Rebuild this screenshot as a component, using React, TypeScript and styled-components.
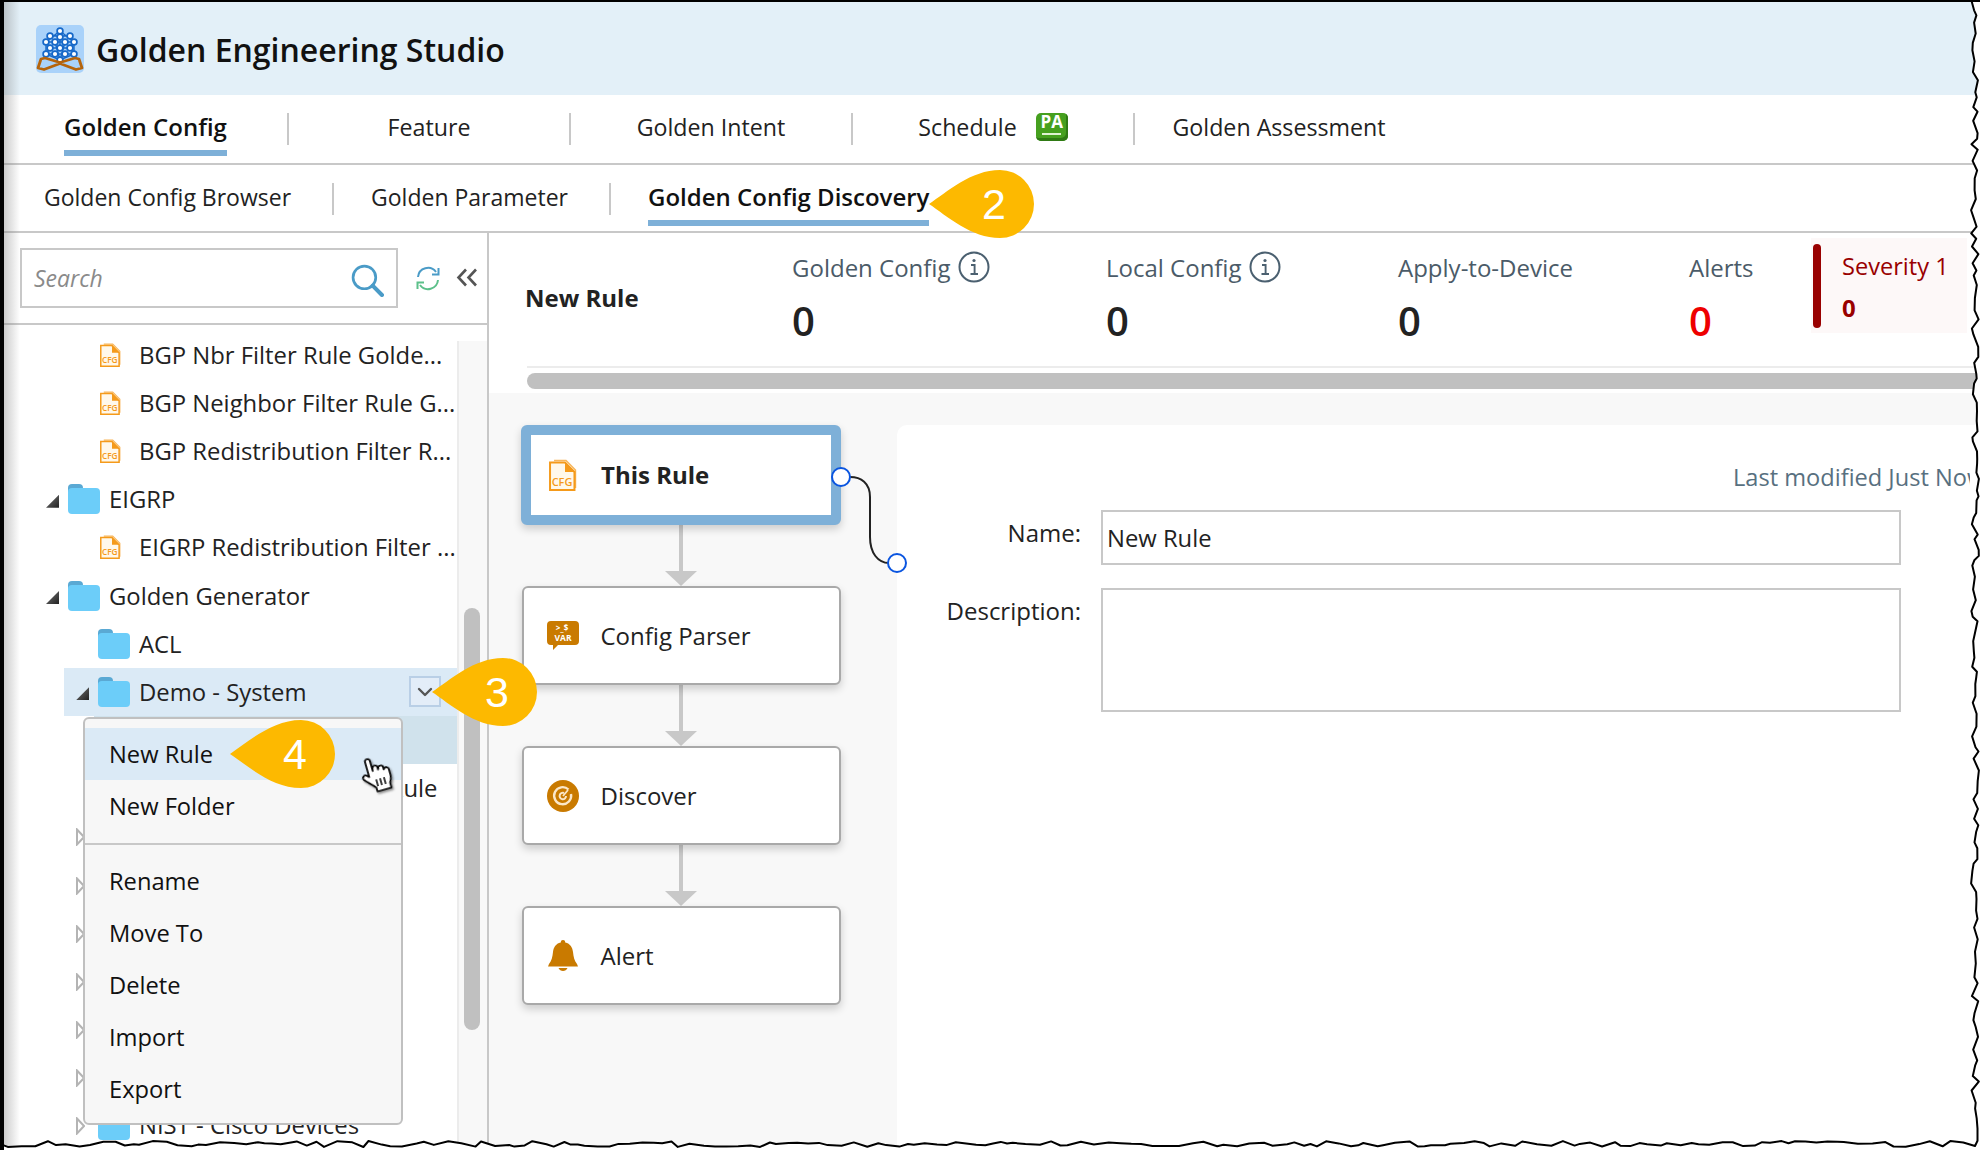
import React from 'react';
import styled, { createGlobalStyle } from 'styled-components';
import { ChevronDown } from 'lucide-react';

const GlobalStyle = createGlobalStyle`
  html, body {
    margin: 0;
    padding: 0;
    background: #fff;
  }
  * {
    box-sizing: border-box;
  }
  body {
    font-family: 'Open Sans', 'Liberation Sans', sans-serif;
    color: #1c1c1c;
  }
`;

const Screen = styled.div`
  position: relative;
  width: 1980px;
  height: 1150px;
  overflow: hidden;
  background: #fff;
  border-top: 2px solid #000;
  border-left: 4px solid #000;
`;

const EdgeShade = styled.div`
  position: absolute;
  left: 0;
  top: 0;
  bottom: 0;
  width: 16px;
  background: linear-gradient(90deg, rgba(120, 120, 120, 0.38), rgba(120, 120, 120, 0));
  z-index: 5;
  pointer-events: none;
`;

const Header = styled.header`
  height: 93px;
  background: #e3f0f8;
  display: flex;
  align-items: center;
  padding-left: 32px;
  gap: 12px;
`;

const AppTitle = styled.h1`
  margin: 0;
  font-size: 32px;
  font-weight: 600;
  color: #111;
  line-height: 40px;
  position: relative;
  top: 1px;
`;

const NavBar = styled.nav`
  display: flex;
  height: 70px;
  padding-top: 18px;
  border-bottom: 2px solid #c8c8c8;
  align-items: flex-start;
`;

const Tab = styled.div<{ $w: number; $last?: boolean }>`
  width: ${p => p.$w}px;
  height: 32px;
  display: flex;
  justify-content: center;
  align-items: flex-start;
  border-right: ${p => (p.$last ? 'none' : '2px solid #c8c8c8')};
`;

const TabLabel = styled.span<{ $active?: boolean }>`
  display: inline-block;
  margin-top: -2px;
  font-size: ${p => (p.$active ? 24 : 23.2)}px;
  line-height: 32px;
  font-weight: ${p => (p.$active ? 600 : 400)};
  color: ${p => (p.$active ? '#111' : '#222')};
  padding-bottom: 7px;
  border-bottom: 6px solid ${p => (p.$active ? '#7eb0d8' : 'transparent')};
  white-space: nowrap;
`;

const SubTabLabel = styled(TabLabel)`
  font-size: ${p => (p.$active ? 24 : 23)}px;
`;

const PaBadge = styled.span`
  width: 32px;
  height: 28px;
  margin-left: 19px;
  border-radius: 5px;
  background: #46a01f;
  box-shadow: inset -2px -3px 0 #2f7a14;
  color: #fff;
  font-size: 17px;
  font-weight: 700;
  line-height: 17px;
  text-align: center;
  position: relative;
  &::after {
    content: '';
    position: absolute;
    left: 6px;
    right: 7px;
    bottom: 6px;
    height: 2px;
    background: #dff2d2;
  }
`;

const SubNav = styled.nav`
  display: flex;
  height: 68px;
  padding: 18px 0 0 40px;
  border-bottom: 2px solid #c8c8c8;
  align-items: flex-start;
`;

const SubTab = styled.div<{ $last?: boolean }>`
  height: 32px;
  padding-right: ${p => (p.$last ? 0 : 41)}px;
  margin-right: 37px;
  border-right: ${p => (p.$last ? 'none' : '2px solid #c8c8c8')};
`;

const Body = styled.div`
  display: flex;
  height: 917px;
`;

const Sidebar = styled.aside`
  width: 485px;
  flex: none;
  border-right: 2px solid #c8c8c8;
  display: flex;
  flex-direction: column;
`;

const SearchBar = styled.div`
  height: 92px;
  flex: none;
  display: flex;
  align-items: flex-start;
  padding: 15px 0 0 16px;
  border-bottom: 2px solid #c8c8c8;
`;

const SearchBox = styled.div`
  width: 378px;
  height: 60px;
  border: 2px solid #c8c8c8;
  display: flex;
  align-items: center;
  padding: 0 12px 0 12px;
  justify-content: space-between;
`;

const Placeholder = styled.span`
  font-size: 23px;
  font-style: italic;
  color: #8a8a8a;
`;

const SearchIcon = styled.svg`
  width: 33px;
  height: 33px;
  margin-top: 5px;
`;

const RefreshIcon = styled.svg`
  width: 26px;
  height: 25px;
  margin: 18px 0 0 17px;
`;

const CollapseIcon = styled.svg`
  width: 22px;
  height: 19px;
  margin: 20px 0 0 15px;
`;

const TreeWrap = styled.div`
  flex: 1;
  display: flex;
  min-height: 0;
`;

const TreeList = styled.div`
  width: 453px;
  flex: none;
  padding-top: 6px;
  overflow: hidden;
`;

const ScrollTrack = styled.div`
  flex: 1;
  margin-top: 16px;
  background: #f8f8f8;
  border-left: 2px solid #ececec;
  padding: 267px 0 0 5px;
`;

const ScrollThumb = styled.div`
  width: 16px;
  height: 422px;
  border-radius: 8px;
  background: #c0c0c0;
`;

const Row = styled.div<{ $depth: number; $bg?: string }>`
  height: 48.1px;
  margin-left: ${p => p.$depth * 30}px;
  padding-left: 11px;
  display: flex;
  align-items: center;
  background: ${p => p.$bg || 'transparent'};
  white-space: nowrap;
`;

const TwistySlot = styled.span`
  width: 14px;
  height: 18px;
  margin-right: 9px;
  flex: none;
  display: flex;
  align-items: center;
  justify-content: flex-start;
  padding-left: 1px;
  svg {
    margin-top: 3px;
  }
`;

const OpenTwisty = styled.span`
  width: 13px;
  height: 13px;
  margin-top: 4px;
  background: linear-gradient(135deg, #777, #222);
  clip-path: polygon(100% 0, 100% 100%, 0 100%);
`;

const IconSlot = styled.span`
  width: 32px;
  margin-right: 9px;
  flex: none;
  display: flex;
  align-items: center;
`;

const FileIconOffset = styled.span`
  margin-left: 2px;
  display: flex;
`;

const RowText = styled.span`
  font-size: 23.85px;
  line-height: 32px;
  color: #222;
`;

const RowMenuButton = styled.span`
  width: 32px;
  height: 31px;
  margin-left: auto;
  margin-right: 16px;
  border: 2px solid #b9cfe6;
  background: #e3edf8;
  color: #555;
  display: flex;
  align-items: center;
  justify-content: center;
`;

const Main = styled.main`
  flex: 1;
  display: flex;
  flex-direction: column;
  min-width: 0;
  overflow: hidden;
`;

const StatRow = styled.div`
  height: 133px;
  flex: none;
  display: flex;
  padding: 18px 0 0 36px;
`;

const StatTitle = styled.div`
  width: 267px;
  flex: none;
  font-size: 24px;
  font-weight: 700;
  line-height: 32px;
  margin-top: 31px;
  color: #222;
`;

const Stat = styled.div<{ $w: number }>`
  width: ${p => p.$w}px;
  flex: none;
`;

const StatLabel = styled.div`
  display: flex;
  align-items: center;
  gap: 7px;
  height: 32px;
  font-size: 24px;
  color: #4b5b68;
  white-space: nowrap;
`;

const StatValue = styled.div<{ $red?: boolean }>`
  margin-top: 16px;
  font-size: 40px;
  line-height: 44px;
  font-weight: 600;
  color: ${p => (p.$red ? '#ee0000' : '#222')};
`;

const SeverityCard = styled.div`
  width: 156px;
  height: 95px;
  margin-top: -13px;
  flex: none;
  background: #fdf8f8;
  display: flex;
  align-items: center;
  padding-left: 2px;
`;

const SeverityBar = styled.div`
  width: 8px;
  height: 84px;
  border-radius: 4px;
  background: #990000;
`;

const SeverityText = styled.div`
  margin: 3px 0 0 21px;
  color: #990000;
  font-size: 23.6px;
  line-height: 32px;
  white-space: nowrap;
  b {
    display: block;
    margin-top: 10px;
    font-size: 24px;
    font-weight: 700;
  }
`;

const HScroll = styled.div`
  height: 27px;
  flex: none;
  margin-left: 38px;
  border-top: 2px solid #ececec;
  padding-top: 5px;
`;

const HThumb = styled.div`
  height: 16px;
  border-radius: 8px 0 0 8px;
  background: #c0c0c0;
`;

const Canvas = styled.div`
  position: relative;
  flex: 1;
  display: flex;
  align-items: flex-start;
  padding: 32px 0 0 32px;
  background: #f8f8f8;
`;

const Flow = styled.div`
  width: 320px;
  flex: none;
  display: flex;
  flex-direction: column;
`;

const Card = styled.div<{ $active?: boolean }>`
  height: ${p => (p.$active ? 100 : 99)}px;
  display: flex;
  align-items: center;
  background: #fff;
  border: ${p => (p.$active ? '10px solid #7eb0d8' : '2px solid #a9a9a9')};
  border-radius: 6px;
  padding-left: ${p => (p.$active ? 16 : 23)}px;
  margin: ${p => (p.$active ? 0 : '0 0.5px')};
  box-shadow: 0 4px 8px rgba(0, 0, 0, 0.18);
  position: relative;
  z-index: 1;
`;

const CardIcon = styled.span`
  width: 32px;
  flex: none;
  margin-right: 22px;
  display: flex;
  justify-content: center;
`;

const CardLabel = styled.span<{ $active?: boolean }>`
  font-size: 24px;
  line-height: 32px;
  font-weight: ${p => (p.$active ? 700 : 400)};
  color: #222;
`;

const Link = styled.div`
  height: 61px;
  display: flex;
  flex-direction: column;
  align-items: center;
  &::before {
    content: '';
    width: 4px;
    flex: 1;
    background: #c8c8c8;
  }
  &::after {
    content: '';
    border-left: 16px solid transparent;
    border-right: 16px solid transparent;
    border-top: 15px solid #c8c8c8;
  }
`;

const Wire = styled.svg`
  position: absolute;
  left: 340px;
  top: 70px;
  width: 80px;
  height: 112px;
  z-index: 2;
`;

const Panel = styled.section`
  flex: 1;
  height: 100%;
  margin-left: 56px;
  background: #fff;
  border-radius: 10px 0 0 0;
  padding-top: 36px;
  overflow: hidden;
  display: flex;
  flex-direction: column;
`;

const Modified = styled.div`
  margin-left: 836px;
  width: 237px;
  overflow: hidden;
  font-size: 23.6px;
  line-height: 32px;
  color: #587080;
  white-space: nowrap;
`;

const FormRow = styled.div<{ $gap: number }>`
  display: flex;
  margin-top: ${p => p.$gap}px;
`;

const FieldLabel = styled.label`
  width: 184px;
  flex: none;
  padding-top: 7px;
  text-align: right;
  font-size: 24px;
  line-height: 32px;
  color: #222;
`;

const TextInput = styled.input`
  width: 800px;
  height: 55px;
  margin-left: 20px;
  border: 2px solid #c8c8c8;
  padding: 1px 4px 0;
  font: 400 23.8px 'Open Sans', sans-serif;
  color: #222;
  background: #fff;
`;

const TextArea = styled.textarea`
  width: 800px;
  height: 124px;
  margin-left: 20px;
  border: 2px solid #c8c8c8;
  background: #fff;
  resize: none;
`;

const ContextMenu = styled.div`
  position: absolute;
  left: 79px;
  top: 715px;
  width: 320px;
  height: 408px;
  padding-top: 9px;
  background: #f7f7f7;
  border: 2px solid #c0c0c0;
  border-radius: 6px;
  z-index: 6;
`;

const MenuItem = styled.div<{ $active?: boolean }>`
  height: 52px;
  padding-left: 24px;
  display: flex;
  align-items: center;
  font-size: 23.7px;
  color: #111;
  background: ${p => (p.$active ? '#dbeaf6' : 'transparent')};
`;

const MenuDivider = styled.div`
  height: 2px;
  margin: 11px 0 10px;
  background: #c8c8c8;
`;

const Callout = styled.div<{ $x: number; $y: number }>`
  position: absolute;
  left: ${p => p.$x}px;
  top: ${p => p.$y}px;
  width: 105px;
  height: 68px;
  z-index: 8;
  svg {
    display: block;
  }
`;

const CalloutNumber = styled.span`
  position: absolute;
  left: 40px;
  width: 50px;
  top: 0;
  height: 68px;
  display: flex;
  align-items: center;
  justify-content: center;
  font-family: 'Liberation Sans', Arial, sans-serif;
  font-size: 43px;
  color: #fff;
`;

const HandCursor = styled.svg`
  position: absolute;
  left: 356px;
  top: 754px;
  width: 34px;
  height: 38px;
  z-index: 9;
  transform: rotate(-16deg);
  filter: drop-shadow(1px 2px 1px rgba(0, 0, 0, 0.45));
`;

const TornEdge = styled.svg`
  position: absolute;
  left: -4px;
  top: -2px;
  width: 1980px;
  height: 1150px;
  z-index: 20;
  pointer-events: none;
`;

const Logo = () => {
  const nodes = [
    [24, 6], [14, 11], [34, 11], [24, 12], [19, 17], [29, 17], [10, 17], [38, 17],
    [14, 23], [24, 23], [34, 23], [19, 29], [29, 29], [10, 29], [38, 29], [24, 35],
  ];
  return (
    <svg width="48" height="48" viewBox="0 0 48 48">
      <rect width="48" height="48" rx="5" fill="#a9d2fa" />
      <path d="M24 6 38 17V29L24 35 10 29V17Z M14 11H34 M14 23H34 M10 17H38 M10 29H38 M19 17 24 35 M29 17 24 35 M24 6V23"
        fill="none" stroke="#1668c8" strokeWidth="1.4" />
      {nodes.map(([x, y]) => (
        <circle key={`${x}-${y}`} cx={x} cy={y} r="2.9" fill="#fff" stroke="#1668c8" strokeWidth="1.7" />
      ))}
      <path d="M24 37.500 9 33 5 34 2 43 8 44.500 24 38.500 40 44.500 46 43 43 34 39 33Z" fill="none" stroke="#b5640c" strokeWidth="2.800" strokeLinejoin="round" />
    </svg>
  );
};

const CfgIcon = ({ w }: { w: number }) => (
  <svg width={w} height={w * 1.14} viewBox="0 0 28 32">
    <path d="M5 1.500h12l9.500 9.500v18" fill="none" stroke="#f7b55a" strokeWidth="1.500" />
    <path d="M1 3.500h15l9.500 9.500v18H1Z" fill="#fff8ea" stroke="#f59a1a" strokeWidth="2" />
    <path d="M16 3.500l9.500 9.500H16Z" fill="#f59a1a" />
    <text x="13" y="27" textAnchor="middle" fontFamily="Open Sans, sans-serif" fontSize="11" fontWeight="600" fill="#f59a1a">CFG</text>
  </svg>
);

const FolderIcon = () => (
  <svg width="32" height="30" viewBox="0 0 32 30">
    <path d="M0 9V4a4 4 0 0 1 4-4h7a4 4 0 0 1 4 4v5Z" fill="#5aa9d4" />
    <rect y="4" width="32" height="26" rx="4" fill="#6ccdf9" />
  </svg>
);

const ClosedTwisty = () => (
  <svg width="9" height="18" viewBox="0 0 9 18">
    <path d="M1 1.500 8 9 1 16.500Z" fill="#fff" stroke="#b4b4b4" strokeWidth="2" />
  </svg>
);

const InfoIcon = () => (
  <svg width="32" height="32" viewBox="0 0 32 32">
    <circle cx="16" cy="16" r="14.500" fill="none" stroke="#4b6070" strokeWidth="2" />
    <circle cx="16" cy="9.500" r="1.600" fill="#4b6070" />
    <path d="M13 14h3.600v8.500M12.500 23h7.500" fill="none" stroke="#4b6070" strokeWidth="1.900" />
  </svg>
);

const VarIcon = () => (
  <svg width="32" height="29" viewBox="0 0 32 29">
    <path d="M4 0h24a4 4 0 0 1 4 4v16a4 4 0 0 1-4 4H11l-5 5v-5H4a4 4 0 0 1-4-4V4a4 4 0 0 1 4-4Z" fill="#c97a00" />
    <text x="15" y="10" textAnchor="middle" fontFamily="Open Sans, sans-serif" fontSize="8" fontWeight="700" fill="#fff">&gt;_$</text>
    <text x="16" y="20" textAnchor="middle" fontFamily="Open Sans, sans-serif" fontSize="8.500" fontWeight="700" fill="#fff">VAR</text>
  </svg>
);

const DiscoverIcon = () => (
  <svg width="32" height="32" viewBox="0 0 32 32">
    <circle cx="16" cy="16" r="16" fill="#c97a00" />
    <path d="M21.500 9.500A8.500 8.500 0 1 0 24 14" fill="none" stroke="#fbe7c8" strokeWidth="2.400" />
    <path d="M19 16a3.200 3.200 0 1 1-2-3" fill="none" stroke="#fbe7c8" strokeWidth="2" />
    <path d="M16 16l5-6" stroke="#fbe7c8" strokeWidth="1.800" />
  </svg>
);

const BellIcon = () => (
  <svg width="32" height="32" viewBox="0 0 32 32">
    <path d="M16 0a2.200 2.200 0 0 1 2.200 2.400C23.500 3.600 25.500 7.500 26 12c.5 5 1.400 9 4 12l1 2.500H1L2 24c2.600-3 3.500-7 4-12 .5-4.500 2.500-8.400 7.800-9.600A2.200 2.200 0 0 1 16 0Z" fill="#c97a00" />
    <path d="M11.500 28h9c-.8 2-2.500 3-4.500 3s-3.700-1-4.500-3Z" fill="#c97a00" />
  </svg>
);

const CalloutBadge = ({ x, y, n }: { x: number; y: number; n: string }) => (
  <Callout $x={x} $y={y}>
    <svg width="105" height="68" viewBox="0 0 105 68">
      <path d="M0 34C18 22 42 0 71 0a34 34 0 0 1 0 68C42 68 18 46 0 34Z" fill="#fdb900" />
    </svg>
    <CalloutNumber>{n}</CalloutNumber>
  </Callout>
);

const tornPaths = () => {
  let seed = 4217;
  const rnd = () => {
    seed = (seed * 16807) % 2147483647;
    return seed / 2147483647;
  };
  const pts: string[] = [];
  for (let y = 0; y < 1144; y += 4 + rnd() * 9) {
    pts.push(`${(1975 + (rnd() - 0.5) * 8).toFixed(1)},${y.toFixed(1)}`);
  }
  for (let x = 1975; x > 0; x -= 5 + rnd() * 10) {
    pts.push(`${x.toFixed(1)},${(1144 + (rnd() - 0.5) * 6).toFixed(1)}`);
  }
  pts.push('0,1144');
  const line = `M${pts.join(' L')}`;
  return { line, fill: `${line} L0,1150 L1980,1150 L1980,0 Z` };
};

const torn = tornPaths();

type TreeItem = {
  depth: number;
  kind: 'file' | 'folder';
  twisty?: 'open' | 'closed';
  label: string;
  bg?: string;
  menu?: boolean;
};

const treeItems: TreeItem[] = [
  { depth: 2, kind: 'file', label: 'BGP Nbr Filter Rule Golde...' },
  { depth: 2, kind: 'file', label: 'BGP Neighbor Filter Rule G...' },
  { depth: 2, kind: 'file', label: 'BGP Redistribution Filter R...' },
  { depth: 1, kind: 'folder', twisty: 'open', label: 'EIGRP' },
  { depth: 2, kind: 'file', label: 'EIGRP Redistribution Filter ...' },
  { depth: 1, kind: 'folder', twisty: 'open', label: 'Golden Generator' },
  { depth: 2, kind: 'folder', label: 'ACL' },
  { depth: 2, kind: 'folder', twisty: 'open', label: 'Demo - System', bg: '#dbeaf6', menu: true },
  { depth: 3, kind: 'file', label: 'New Rule', bg: '#d0e2ec' },
  { depth: 3, kind: 'file', label: 'Golden Config New Rule' },
  { depth: 2, kind: 'folder', twisty: 'closed', label: 'IP' },
  { depth: 2, kind: 'folder', twisty: 'closed', label: 'IPv6' },
  { depth: 2, kind: 'folder', twisty: 'closed', label: 'MPLS' },
  { depth: 2, kind: 'folder', twisty: 'closed', label: 'NAT' },
  { depth: 2, kind: 'folder', twisty: 'closed', label: 'NTP' },
  { depth: 2, kind: 'folder', twisty: 'closed', label: 'OSPF' },
  { depth: 2, kind: 'folder', twisty: 'closed', label: 'NIST - Cisco Devices' },
];

const App: React.FC = () => {
  return (
    <Screen>
      <GlobalStyle />
      <EdgeShade />
      <Header>
        <Logo />
        <AppTitle>Golden Engineering Studio</AppTitle>
      </Header>
      <NavBar>
        <Tab $w={285}><TabLabel $active>Golden Config</TabLabel></Tab>
        <Tab $w={282}><TabLabel>Feature</TabLabel></Tab>
        <Tab $w={282}><TabLabel>Golden Intent</TabLabel></Tab>
        <Tab $w={282}><TabLabel>Schedule</TabLabel><PaBadge>PA</PaBadge></Tab>
        <Tab $w={288} $last><TabLabel>Golden Assessment</TabLabel></Tab>
      </NavBar>
      <SubNav>
        <SubTab><SubTabLabel>Golden Config Browser</SubTabLabel></SubTab>
        <SubTab><SubTabLabel>Golden Parameter</SubTabLabel></SubTab>
        <SubTab $last><SubTabLabel $active>Golden Config Discovery</SubTabLabel></SubTab>
      </SubNav>
      <Body>
        <Sidebar>
          <SearchBar>
            <SearchBox>
              <Placeholder>Search</Placeholder>
              <SearchIcon viewBox="0 0 32 32">
                <circle cx="13" cy="13" r="11" fill="none" stroke="#4a9bc7" strokeWidth="2.600" />
                <path d="M21 21l9 9" stroke="#4a9bc7" strokeWidth="4" strokeLinecap="round" />
              </SearchIcon>
            </SearchBox>
            <RefreshIcon viewBox="0 0 26 25">
              <path d="M3 11A10 10 0 0 1 21 6" fill="none" stroke="#4a9bc7" strokeWidth="2" />
              <path d="M23.500 2v6.500H17" fill="none" stroke="#4a9bc7" strokeWidth="2" />
              <path d="M23 14A10 10 0 0 1 5 19" fill="none" stroke="#5cc08a" strokeWidth="2" />
              <path d="M2.500 23v-6.500H9" fill="none" stroke="#5cc08a" strokeWidth="2" />
            </RefreshIcon>
            <CollapseIcon viewBox="0 0 22 19">
              <path d="M10 1.500 2.500 9.500 10 17.500M20 1.500 12.500 9.500 20 17.500" fill="none" stroke="#555" strokeWidth="2.600" />
            </CollapseIcon>
          </SearchBar>
          <TreeWrap>
            <TreeList>
              {treeItems.map(item => (
                <Row key={item.label} $depth={item.depth} $bg={item.bg}>
                  <TwistySlot>
                    {item.twisty === 'open' && <OpenTwisty />}
                    {item.twisty === 'closed' && <ClosedTwisty />}
                  </TwistySlot>
                  <IconSlot>
                    {item.kind === 'folder' ? <FolderIcon /> : <FileIconOffset><CfgIcon w={21} /></FileIconOffset>}
                  </IconSlot>
                  <RowText>{item.label}</RowText>
                  {item.menu && (
                    <RowMenuButton><ChevronDown size={24} strokeWidth={2.4} /></RowMenuButton>
                  )}
                </Row>
              ))}
            </TreeList>
            <ScrollTrack><ScrollThumb /></ScrollTrack>
          </TreeWrap>
        </Sidebar>
        <Main>
          <StatRow>
            <StatTitle>New Rule</StatTitle>
            <Stat $w={314}>
              <StatLabel>Golden Config <InfoIcon /></StatLabel>
              <StatValue>0</StatValue>
            </Stat>
            <Stat $w={292}>
              <StatLabel>Local Config <InfoIcon /></StatLabel>
              <StatValue>0</StatValue>
            </Stat>
            <Stat $w={291}>
              <StatLabel>Apply-to-Device</StatLabel>
              <StatValue>0</StatValue>
            </Stat>
            <Stat $w={122}>
              <StatLabel>Alerts</StatLabel>
              <StatValue $red>0</StatValue>
            </Stat>
            <SeverityCard>
              <SeverityBar />
              <SeverityText>Severity 1<b>0</b></SeverityText>
            </SeverityCard>
          </StatRow>
          <HScroll><HThumb /></HScroll>
          <Canvas>
            <Flow>
              <Card $active>
                <CardIcon><CfgIcon w={28} /></CardIcon>
                <CardLabel $active>This Rule</CardLabel>
              </Card>
              <Link />
              <Card>
                <CardIcon><VarIcon /></CardIcon>
                <CardLabel>Config Parser</CardLabel>
              </Card>
              <Link />
              <Card>
                <CardIcon><DiscoverIcon /></CardIcon>
                <CardLabel>Discover</CardLabel>
              </Card>
              <Link />
              <Card>
                <CardIcon><BellIcon /></CardIcon>
                <CardLabel>Alert</CardLabel>
              </Card>
            </Flow>
            <Wire viewBox="0 0 80 112">
              <path d="M21 14C32 14 41 20 41 34V74C41 90 49 100 60 100" fill="none" stroke="#222" strokeWidth="2" />
              <circle cx="12" cy="14" r="9" fill="#fff" stroke="#0a55e0" strokeWidth="2" />
              <circle cx="68" cy="100" r="9" fill="#fff" stroke="#0a55e0" strokeWidth="2" />
            </Wire>
            <Panel>
              <Modified>Last modified Just Now</Modified>
              <FormRow $gap={17}>
                <FieldLabel>Name:</FieldLabel>
                <TextInput defaultValue="New Rule" />
              </FormRow>
              <FormRow $gap={23}>
                <FieldLabel>Description:</FieldLabel>
                <TextArea />
              </FormRow>
            </Panel>
          </Canvas>
        </Main>
      </Body>

      <ContextMenu>
        <MenuItem $active>New Rule</MenuItem>
        <MenuItem>New Folder</MenuItem>
        <MenuDivider />
        <MenuItem>Rename</MenuItem>
        <MenuItem>Move To</MenuItem>
        <MenuItem>Delete</MenuItem>
        <MenuItem>Import</MenuItem>
        <MenuItem>Export</MenuItem>
      </ContextMenu>

      <CalloutBadge x={925} y={168} n="2" />
      <CalloutBadge x={428} y={656} n="3" />
      <CalloutBadge x={226} y={718} n="4" />

      <HandCursor viewBox="0 0 34 38">
        <path d="M9 3.500a2.500 2.500 0 0 1 5 0V14l.5-2.500a2.500 2.500 0 0 1 5 .5v2l.5-1a2.500 2.500 0 0 1 5 .5v2l.5-.5a2.500 2.500 0 0 1 4.500 1.500v6c0 3-1 5-2.500 7.500V35H13v-4C11 28 6 24 3 20a2.600 2.600 0 0 1 4-3.200l2 2Z" fill="#fff" stroke="#000" strokeWidth="1.700" strokeLinejoin="round" />
        <path d="M15 23v7M19 23v7M23 23v7" stroke="#000" strokeWidth="1.500" />
      </HandCursor>

      <TornEdge viewBox="0 0 1980 1150">
        <path d={torn.fill} fill="#fff" />
        <path d={torn.line} fill="none" stroke="#000" strokeWidth="2" strokeLinejoin="round" />
      </TornEdge>
    </Screen>
  );
};

export default App;
